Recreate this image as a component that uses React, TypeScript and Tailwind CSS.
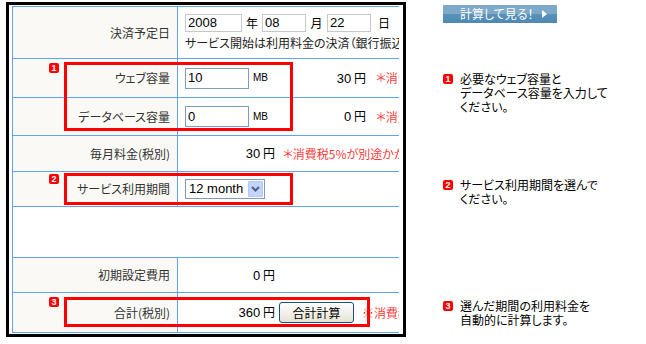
import React from "react";

const line = "border-[#62a3ef]";

function Badge({ n, className = "" }: { n: number; className?: string }) {
  return (
    <div
      className={`flex h-[10px] w-[10px] shrink-0 items-center justify-center rounded-[2px] bg-[#ff0000] font-['Liberation_Sans',sans-serif] text-[9px] leading-none font-bold text-white ${className}`}
    >
      {n}
    </div>
  );
}

function Label({ children }: { children?: React.ReactNode }) {
  return (
    <div className={`flex w-[165px] shrink-0 items-center justify-end border-r ${line} bg-[#faf9f5] pr-[7px] text-[#333]`}>
      {children}
    </div>
  );
}

function Note({ children }: { children: React.ReactNode }) {
  return <span className="whitespace-nowrap text-[#ff3b3b]">{children}</span>;
}

function Yen({ v, w }: { v: string; w: string }) {
  return (
    <div className={`${w} shrink-0 text-right text-black`}>
      <span className="font-['Liberation_Sans',sans-serif] text-[13px]">{v}</span> 円
    </div>
  );
}

function Guide({ n, mt, lines }: { n: number; mt: string; lines: string[] }) {
  return (
    <div className={`flex items-start text-black ${mt}`}>
      <Badge n={n} className="mt-[2px] mr-[7px]" />
      <div>
        {lines.map((l) => (
          <div key={l}>{l}</div>
        ))}
      </div>
    </div>
  );
}

export default function App() {
  const num = "font-['Liberation_Sans',sans-serif] text-[13px] text-black";
  return (
    <div className="relative h-[344px] w-[646px] overflow-hidden bg-white font-['Noto_Sans_CJK_JP',sans-serif] text-[12px] leading-[14px] [font-feature-settings:'palt']">
      <div className="flex">
        {/* left: calculation table */}
        <div className="mt-[2px] ml-[6px] h-[335px] w-[400px] shrink-0 border-[3px] border-black pt-px pl-[3px]">
          <div className={`w-[387px] overflow-hidden border-t border-l ${line}`}>
            {/* 決済予定日 */}
            <div className={`flex h-[52px] border-b ${line}`}>
              <Label>決済予定日</Label>
              <div className="flex flex-col pt-[7px] pl-[7px]">
                <div className="flex items-center">
                  <div className={`flex h-[18px] w-[57px] items-center border border-[#c8c8c8] pl-[2px] ${num}`}>2008</div>
                  <span className="w-[20px] text-center">年</span>
                  <div className={`flex h-[18px] w-[44px] items-center border border-[#c8c8c8] pl-[2px] ${num}`}>08</div>
                  <span className="w-[21px] text-center">月</span>
                  <div className={`flex h-[18px] w-[44px] items-center border border-[#c8c8c8] pl-[2px] ${num}`}>22</div>
                  <span className="ml-[7px]">日</span>
                </div>
                <div className="mt-[4px] whitespace-nowrap text-[#222]">
                  サービス開始は利用料金の決済（銀行振込，クレジットカード）確認後となります。
                </div>
              </div>
            </div>
            {/* ウェブ容量 */}
            <div className={`flex h-[39px] border-b ${line}`}>
              <Label>ウェブ容量</Label>
              <div className="flex items-center pl-[7px]">
                <div className="flex w-[120px] shrink-0 items-center">
                  <div className={`flex h-[21px] w-[64px] items-center border border-[#7f9db9] pl-[2px] ${num}`}>10</div>
                  <span className="ml-[4px] font-['Liberation_Sans',sans-serif] text-[10px]">MB</span>
                </div>
                <Yen v="30" w="w-[61px]" />
                <span className="ml-[10px]">
                  <Note>＊消費税5%が別途かかります。</Note>
                </span>
              </div>
            </div>
            {/* データベース容量 */}
            <div className={`flex h-[38px] border-b ${line}`}>
              <Label>データベース容量</Label>
              <div className="flex items-center pl-[7px]">
                <div className="flex w-[120px] shrink-0 items-center">
                  <div className={`flex h-[21px] w-[64px] items-center border border-[#7f9db9] pl-[2px] ${num}`}>0</div>
                  <span className="ml-[4px] font-['Liberation_Sans',sans-serif] text-[10px]">MB</span>
                </div>
                <Yen v="0" w="w-[61px]" />
                <span className="ml-[10px]">
                  <Note>＊消費税5%が別途かかります。</Note>
                </span>
              </div>
            </div>
            {/* 毎月料金 */}
            <div className={`flex h-[36px] border-b ${line}`}>
              <Label>毎月料金(税別)</Label>
              <div className="flex items-center pl-[7px]">
                <Yen v="30" w="w-[90px]" />
                <span className="ml-[8px]">
                  <Note>＊消費税5%が別途かかります。</Note>
                </span>
              </div>
            </div>
            {/* サービス利用期間 */}
            <div className={`flex h-[35px] border-b ${line}`}>
              <Label>サービス利用期間</Label>
              <div className="flex items-center pl-[7px]">
                <div className="flex h-[20px] w-[80px] items-center justify-between border border-[#7f9db9] pr-px pl-[3px]">
                  <span className={num}>12 month</span>
                  <span className="flex h-[16px] w-[15px] items-center justify-center rounded-[1px] border border-[#b4c8f4] bg-[#c3d5fc]">
                    <svg width="9" height="6" viewBox="0 0 9 6">
                      <path d="M1 1l3.5 3.5L8 1" fill="none" stroke="#4d6185" strokeWidth="2" />
                    </svg>
                  </span>
                </div>
              </div>
            </div>
            {/* empty */}
            <div className={`h-[51px] border-b ${line}`} />
            {/* 初期設定費用 */}
            <div className={`flex h-[35px] border-b ${line}`}>
              <Label>初期設定費用</Label>
              <div className="flex items-center pl-[7px]">
                <Yen v="0" w="w-[90px]" />
              </div>
            </div>
            {/* 合計 */}
            <div className={`flex h-[40px] border-b ${line}`}>
              <Label>合計(税別)</Label>
              <div className="flex items-center pl-[7px]">
                <Yen v="360" w="w-[90px]" />
                <button className="ml-[4px] h-[21px] w-[75px] shrink-0 rounded-[3px] border border-[#1c4f7c] bg-gradient-to-b from-white to-[#e6e3d6] text-[12px] text-black">
                  合計計算
                </button>
                <span className="ml-[8px]">
                  <Note>※消費税5%が別途かかります。</Note>
                </span>
              </div>
            </div>
          </div>
        </div>

        {/* right: guide */}
        <div className="ml-[37px] flex flex-col">
          <div className="mt-[5px] flex h-[18px] w-[114px] items-center bg-[linear-gradient(#7eaaca_0%,#7eaaca_50%,#5a92ba_50%,#4f88b0_100%)] pl-[17px] text-white">
            <span>計算して見る！</span>
            <svg className="ml-[8px]" width="5" height="8" viewBox="0 0 5 8">
              <path d="M0 0l5 4-5 4z" fill="white" />
            </svg>
          </div>
          <Guide n={1} mt="mt-[49px]" lines={["必要なウェブ容量と", "データベース容量を入力して", "ください。"]} />
          <Guide n={2} mt="mt-[64px]" lines={["サービス利用期間を選んで", "ください。"]} />
          <Guide n={3} mt="mt-[93px]" lines={["選んだ期間の利用料金を", "自動的に計算します。"]} />
        </div>
      </div>

      {/* highlight boxes */}
      <div className="absolute top-[62px] left-[64px] h-[69px] w-[229px] border-[3px] border-[#ff0000]" />
      <div className="absolute top-[173px] left-[64px] h-[32px] w-[229px] border-[3px] border-[#ff0000]" />
      <div className="absolute top-[297px] left-[64px] h-[30px] w-[306px] border-[3px] border-[#ff0000]" />
      <div className="absolute top-[63px] left-[49px]"><Badge n={1} /></div>
      <div className="absolute top-[174px] left-[49px]"><Badge n={2} /></div>
      <div className="absolute top-[297px] left-[49px]"><Badge n={3} /></div>
    </div>
  );
}
